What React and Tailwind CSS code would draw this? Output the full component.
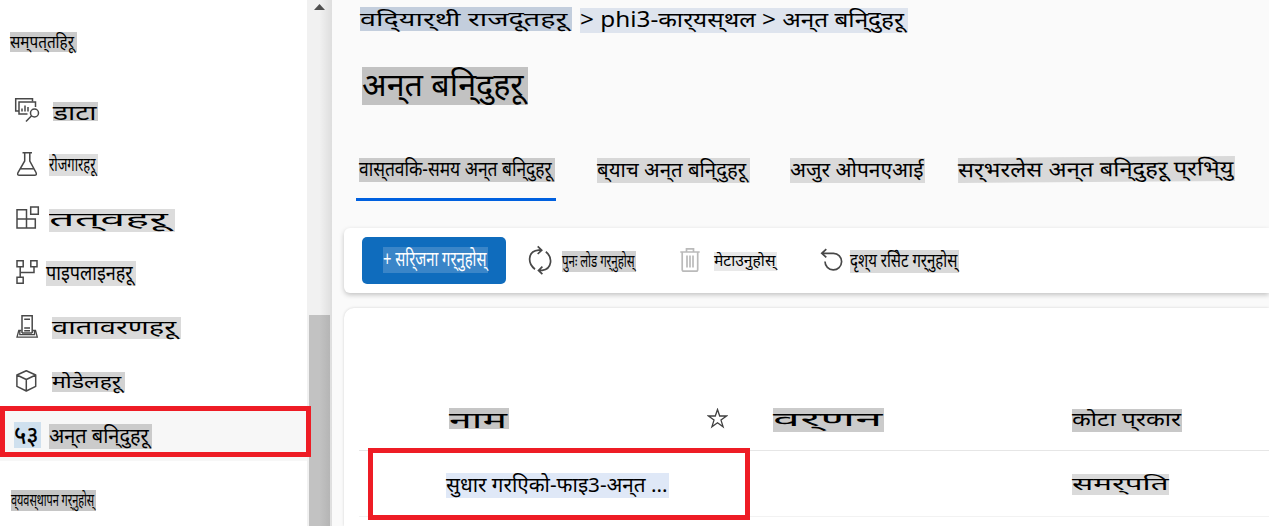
import { useLayoutEffect, useRef, useState } from "react";

const HEAD_RATIO = 0.64;

// How far the last sign reaches past its advance width, in em.
function tailOf(text) {
  if (text.endsWith("ू")) return 0.12;
  if (text.endsWith("्")) return 0.06;
  return 0;
}

// A highlighted label whose text is stretched to the width of its box.
// head and base are the distances from the box top to the headline and the baseline.
function Label({ text, head, base, className, pad = 1, ratio = HEAD_RATIO }) {
  const box = useRef(null);
  const inner = useRef(null);
  const mark = useRef(null);
  const [fit, setFit] = useState({ x: 1, y: 0 });
  const size = (base - head) / ratio;

  useLayoutEffect(() => {
    const w = box.current.clientWidth - pad;
    const tw = inner.current.offsetWidth + tailOf(text) * size;
    const baseline = mark.current.offsetTop + mark.current.offsetHeight - inner.current.offsetTop;
    setFit({ x: w / tw, y: base - baseline });
  }, [base, pad, size, text]);

  return (
    <span ref={box} className={`relative block shrink-0 ${className}`}>
      <span
        ref={inner}
        className="block w-max origin-top-left whitespace-nowrap leading-none"
        style={{ fontSize: size, transform: `translateY(${fit.y}px) scaleX(${fit.x})` }}
      >
        {text}
        <span ref={mark} className="inline-block h-px w-0" />
      </span>
    </span>
  );
}

function Icon({ children, className = "", w = 28, h = 28, stroke = "#484848", sw = 1.5 }) {
  return (
    <svg className={`block shrink-0 ${className}`} width={w} height={h} viewBox={`0 0 ${w} ${h}`} fill="none" stroke={stroke} strokeWidth={sw}>
      {children}
    </svg>
  );
}

const navItems = [
  {
    text: "डाटा", head: 5, base: 18, cls: "ml-[11px] mt-[19px] h-[19px] w-[45px] bg-[#cdcdcd]",
    icon: (
      <>
        <path d="M5 15H1.7V2.7H18.5V5.5" />
        <path d="M13.5 18H5V6H21.5V11" />
        <path d="M8 15.5V12.5M11 15.5V9.5M14 15.5V11" />
        <circle cx="20.5" cy="17" r="4" />
        <path d="M17.6 19.8L12 25.5" />
      </>
    ),
  },
  {
    text: "रोजगारहर‌ू", head: 5, base: 17, cls: "ml-[7px] mt-[17px] h-[22px] w-[49px] bg-[#dddddd]",
    icon: (
      <>
        <path d="M8.5 2.7H18M10.7 2.7V11L4 22.5Q2.8 25.3 5.5 25.3H20.5Q23.2 25.3 22 22.5L15.8 11V2.7" />
        <path d="M6.5 18.8H19.8" />
      </>
    ),
  },
  {
    text: "तत्‌वहर‌ू", head: 4.7, base: 17, cls: "ml-[7px] mt-[18px] h-[23px] w-[126px] bg-[#dcdcdc]",
    icon: <path d="M3 5.7H12.5V24H3ZM3 15H21.3V24H3M16.7 3H24.3V10.3H16.7Z" />,
  },
  {
    text: "पाइपलाइनहर‌ू", head: 5.7, base: 19, cls: "ml-[4px] mt-[16px] h-[25px] w-[90px] bg-[#dcdcdc]",
    icon: <path d="M3 2.8H9.2V8.7H3ZM16.8 2.8H23V8.7H16.8ZM3 19.3H9.2V25.3H3ZM6.2 8.7V19.3M6.2 14.5H20V8.7" />,
  },
  {
    text: "वातावरणहर‌ू", head: 5.2, base: 17, cls: "ml-[10px] mt-[18px] h-[22px] w-[129px] bg-[#dadada]",
    icon: (
      <>
        <path d="M8 21V3.8H18.2V21M8 21H18.2M10.2 7.2H16M10.2 16H16M10.2 18.8H16" />
        <path d="M7.5 18.5H4.8L3 25.2H23.3L21.5 18.5H18.7M5.8 19V22.7H20.5V19" strokeWidth="1.3" />
      </>
    ),
  },
  {
    text: "मोडेलहर‌ू", head: 4, base: 15.5, cls: "ml-[10px] mt-[19px] h-[20px] w-[73px] bg-[#d2d2d2]",
    icon: <path d="M12.3 4.7L21.7 9V20.3L12.3 25L2.9 20.3V9ZM2.9 9L12.3 13.5L21.7 9M12.3 13.5V25" strokeLinejoin="round" />,
  },
];

function Sidebar() {
  return (
    <aside className="flex h-full w-[307px] shrink-0 flex-col bg-white">
      <div className="h-[83px] pl-[10px] pt-8">
        <Label text="सम्‌पत्‌तहिर‌ू" head={4.5} base={15.8} className="h-[20px] w-[67px] bg-[#cacaca]" />
      </div>
      {navItems.map((n) => (
        <div key={n.text} className="flex h-[54px] shrink-0 items-start pl-[14px]">
          <Icon className="mt-[13px]">{n.icon}</Icon>
          <Label text={n.text} head={n.head} base={n.base} className={n.cls} />
        </div>
      ))}
      <div className="relative flex h-[54px] shrink-0 items-start bg-[#f7f7f7] pl-[14px]">
        <Label text="५३" head={6} base={22} pad={2} className="mt-[15px] h-[26px] w-[27px] bg-[#cfe0ee] font-medium" />
        <Label text="अन्‌त बनि्‌दुहर‌ू" head={6} base={18.8} className="ml-[8px] mt-[17px] h-[25px] w-[103px] bg-[#cbcbcb]" />
        <div className="absolute -top-px left-0 z-10 h-[51px] w-[311px] border-[5px] border-[#ee1c25]" />
      </div>
      <div className="pl-[11px] pt-[29px]">
        <Label text="व्‌यवस्‌थापन गर्‌नुहोस्" head={5} base={16.2} className="h-[21px] w-[85px] bg-[#c6c6c6]" />
      </div>
    </aside>
  );
}

function Scrollbar() {
  return (
    <div className="flex h-full w-[25px] shrink-0 flex-col bg-linear-to-r from-[#f1f1f1] from-50% to-[#dedede]">
      <div className="h-[315px] pl-[7px] pt-[4px]">
        <svg className="block" width="11" height="6" viewBox="0 0 11 6">
          <path d="M0 6L5.5 0L11 6Z" fill="#4f4f4f" />
        </svg>
      </div>
      <div className="ml-[2px] w-[21px] grow bg-linear-to-r from-[#c2c2c2] from-50% to-[#b5b5b5]" />
    </div>
  );
}

const tabs = [
  { text: "ब्‌याच अन्‌त बनि्‌दुहर‌ू", head: 5.5, base: 18.7, cls: "ml-[41px] h-[25px] w-[153px] bg-[#d8d8d8]" },
  { text: "अजुर ओपनएआई", head: 5.5, base: 18.7, cls: "ml-[40px] h-[25px] w-[135px] bg-[#dadada]" },
  { text: "सर्‌भरलेस अन्‌त बनि्‌दुहर‌ू प्‌रभि्‌यु", head: 5.9, base: 19.3, cls: "ml-[33px] -mt-px h-[25px] w-[277px] -rotate-[0.4deg] bg-[#d9d9d9]" },
];

function Toolbar() {
  return (
    <div className="ml-3 flex h-[65px] items-start rounded-l-[6px] bg-white pl-[18px] shadow-[0_2px_5px_rgba(0,0,0,0.22)]">
      <button className="mt-[9px] flex h-[47px] w-[144px] shrink-0 items-start rounded-[5px] bg-[#0f6cbd] pl-[21px] pt-[10px] text-left text-white">
        <Label text="+ सरि्‌जना गर्‌नुहोस्" head={5.8} base={19.4} className="h-[26px] w-[105px] bg-[#3a85c8]" />
      </button>
      <Icon className="ml-[20px] mt-[17px]" w={28} h={30} sw={1.7}>
        <path d="M9 24.2C1.5 18.5 1.2 6.5 12.5 5.2H15.5M11.7 1.4L15.7 5.2L11.7 9M19.8 6.8C27 12.3 26.2 24 16.2 25.4H12.7M16.4 21.6L12.5 25.4L16.4 29.2" />
      </Icon>
      <Label text="पुनः लोड गर्‌नुहोस्" head={5} base={15.8} className="ml-[8px] mt-[23px] h-[21px] w-[74px] bg-[#d0d0d0]" />
      <Icon className="ml-[43px] mt-[19px]" w={24} h={26} stroke="#bababa" sw={1.7}>
        <path d="M1.3 5H20.7M7.5 5V1.8H14.5V5M3.2 5V22.5Q3.2 24.2 5 24.2H17Q18.7 24.2 18.7 22.5V5M8 8.5V20.5M11 8.5V20.5M14 8.5V20.5" />
      </Icon>
      <Label text="मेटाउनुहोस्" head={3.7} base={14.2} className="ml-[11px] mt-[24px] h-[19px] w-[63px] bg-[#e9e9e9]" />
      <Icon className="ml-[43px] mt-[20px]" w={24} h={24} sw={1.7}>
        <path d="M6.3 1.2L1.8 5.3L6.3 9.4M2 5.3H13.5A8.3 8.3 0 1 1 5 13.5" />
      </Icon>
      <Label text="दृश्‌य रसिेट गर्‌नुहोस्" head={5} base={17.2} className="ml-[6px] mt-[22px] h-[23px] w-[109px] bg-[#d9d9d9]" />
    </div>
  );
}

function EndpointTable() {
  return (
    <div className="ml-3 mt-[15px] flex h-[218px] flex-col rounded-tl-[10px] bg-white pl-[15px] pt-[100px] shadow-[0_0_3px_rgba(0,0,0,0.16)]">
      <div className="flex h-[43px] shrink-0 items-start border-b border-[#e6e6e6] pl-[90px]">
        <Label text="नाम" head={5.7} base={20.2} pad={2} className="h-[21px] w-[60px] bg-[#c6c6c6]" />
        <svg className="ml-[198px] block shrink-0" width="21" height="21" viewBox="0 0 21 21" fill="none" stroke="#404040" strokeWidth="1.3">
          <path d="M10.5 1.5L12.7 8H19.5L14 12.1L16.1 18.8L10.5 14.8L4.9 18.8L7 12.1L1.5 8H8.3Z" />
        </svg>
        <Label text="वर्‌णन" head={5.7} base={18.2} className="ml-[45px] h-[24px] w-[111px] bg-[#cbcbcb]" />
        <Label text="कोटा प्‌रकार" head={4.9} base={17.4} className="ml-[188px] mt-px h-[23px] w-[110px] bg-[#c8c8c8]" />
      </div>
      <div className="relative flex h-[66px] shrink-0 items-start border-b border-[#f2f2f2] pl-[87px]">
        <Label text="सुधार गरएिको-फाइ3-अन्‌त ..." head={6} base={19} className="mt-[22px] h-[25px] w-[223px] bg-[#dfe8f7]" />
        <Label text="समर्‌पति" head={4.3} base={15.6} className="ml-[403px] mt-[23px] h-[21px] w-[97px] bg-[#dadada]" />
        <div className="absolute -top-[3px] left-[9px] h-[72px] w-[382px] border-[5px] border-[#ee1c25]" />
      </div>
    </div>
  );
}

export default function App() {
  return (
    <div className="flex h-[526px] w-[1269px] overflow-hidden bg-[#fafafa] font-['Noto_Sans','Noto_Sans_Devanagari',sans-serif] text-black">
      <Sidebar />
      <Scrollbar />
      <main className="flex min-w-0 grow flex-col overflow-hidden">
        <nav className="flex h-[67px] shrink-0 items-start pl-[28px] pt-[7px]">
          <Label text="वदि्‌यार्‌थी राजदूतहर‌ू" head={6.2} base={18.9} className="h-[24px] w-[212px] bg-[#c3cedd]" />
          <Label text="> phi3-कार्‌यस्‌थल > अन्‌त बनि्‌दुहर‌ू" head={5.5} base={19} className="ml-[8px] mt-px h-[25px] w-[328px] bg-[#dee4ee]" />
        </nav>
        <h1 className="h-[91px] shrink-0 pl-[30px]">
          <Label text="अन्‌त बनि्‌दुहर‌ू" head={9} base={29} className="h-[38px] w-[166px] bg-[#c2c2c2]" />
        </h1>
        <div className="flex h-[70px] shrink-0 items-start pl-[24px]">
          <div className="h-[43px] w-[200px] shrink-0 border-b-[3px] border-[#0060df] pl-[3px]">
            <Label text="वास्‌तवकि-समय अन्‌त बनि्‌दुहर‌ू" head={5.5} base={18.3} className="h-[24px] w-[196px] bg-[#cacaca]" />
          </div>
          {tabs.map((t) => (
            <Label key={t.text} text={t.text} head={t.head} base={t.base} className={t.cls} />
          ))}
        </div>
        <Toolbar />
        <EndpointTable />
      </main>
    </div>
  );
}
